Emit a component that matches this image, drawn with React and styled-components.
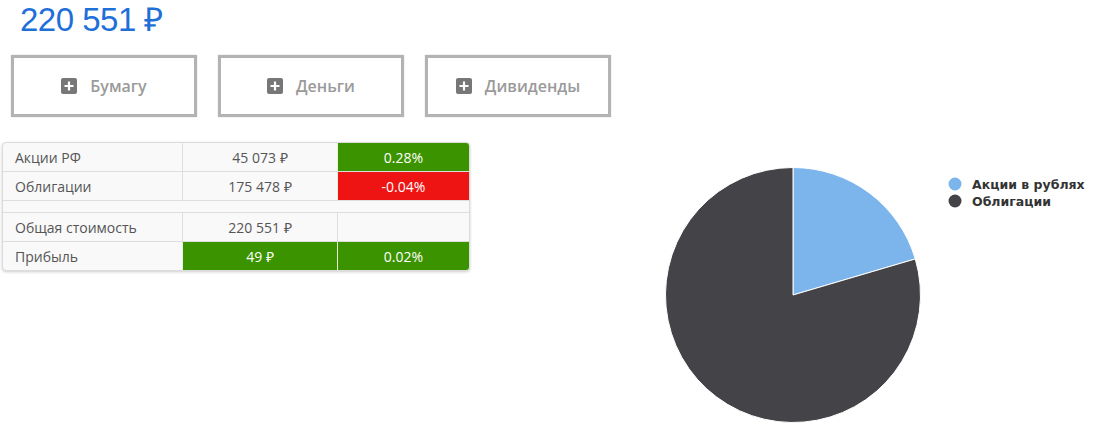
import styled, { createGlobalStyle } from "styled-components";

const GlobalStyle = createGlobalStyle`
    body {
        margin: 0;
        background: #fff;
        font-family: "Open Sans", "Liberation Sans", sans-serif;
    }
`

const rows = [
    { name: "Акции РФ", value: "45 073 ₽", change: "0.28%", tone: "up" },
    { name: "Облигации", value: "175 478 ₽", change: "-0.04%", tone: "down" },
]

const slices = [
    { label: "Акции в рублях", amount: 45073, color: "#7cb5ec" },
    { label: "Облигации", amount: 175478, color: "#434348" },
]

const PlusIcon = () => (
    <svg width="16" height="16" viewBox="0 0 16 16">
        <rect width="16" height="16" rx="2" fill="#777" />
        <path d="M8 3.5v9M3.5 8h9" stroke="#fff" strokeWidth="2.2" />
    </svg>
)

const Pie = () => {
    const cx = 323, cy = 153, r = 127.5
    const total = slices.reduce((s, x) => s + x.amount, 0)
    let angle = 0
    const point = (a) => [cx + r * Math.sin(a), cy - r * Math.cos(a)]
    return (
        <svg width="645" height="296" viewBox="0 0 645 296">
            {slices.map((slice) => {
                const start = angle
                const end = angle + (slice.amount / total) * Math.PI * 2
                angle = end
                const [x1, y1] = point(start)
                const [x2, y2] = point(end)
                const large = end - start > Math.PI ? 1 : 0
                return (
                    <path
                        key={slice.label}
                        d={`M${cx} ${cy} L${x1} ${y1} A${r} ${r} 0 ${large} 1 ${x2} ${y2} Z`}
                        fill={slice.color}
                        stroke="#fff"
                        strokeWidth="1"
                        strokeLinejoin="round"
                    />
                )
            })}
            {slices.map((slice, i) => (
                <g key={slice.label} transform={`translate(485 ${42 + i * 17})`}>
                    <circle cx="0" cy="0" r="6.5" fill={slice.color} />
                    <LegendText x="17" y="4.5">{slice.label}</LegendText>
                </g>
            ))}
        </svg>
    )
}

const App = () => {
    return (
        <Page>
            <GlobalStyle />
            <Total>220 551 ₽</Total>
            <Toolbar>
                <AddButton><PlusIcon />Бумагу</AddButton>
                <AddButton><PlusIcon />Деньги</AddButton>
                <AddButton><PlusIcon />Дивиденды</AddButton>
            </Toolbar>
            <Content>
                <Summary>
                    {rows.map((row) => (
                        <Row key={row.name}>
                            <NameCell>{row.name}</NameCell>
                            <Cell>{row.value}</Cell>
                            <Cell $tone={row.tone}>{row.change}</Cell>
                        </Row>
                    ))}
                    <Spacer />
                    <Row>
                        <NameCell>Общая стоимость</NameCell>
                        <Cell>220 551 ₽</Cell>
                        <Cell />
                    </Row>
                    <Row $last>
                        <NameCell>Прибыль</NameCell>
                        <Cell $tone="up">49 ₽</Cell>
                        <Cell $tone="up">0.02%</Cell>
                    </Row>
                </Summary>
                <ChartArea>
                    <Pie />
                </ChartArea>
            </Content>
        </Page>
    )
}

const Page = styled.div`
    padding: 0 2px;
    width: 1113px;
`
const Total = styled.h1`
    margin: 0 0 0 18px;
    font-family: "Liberation Sans", sans-serif;
    font-weight: normal;
    font-size: 33px;
    line-height: 40px;
    letter-spacing: -0.5px;
    color: #1f6fd8;
`
const Toolbar = styled.div`
    display: flex;
    gap: 21px;
    margin: 15px 0 0 9px;
`
const AddButton = styled.button`
    display: flex;
    align-items: center;
    justify-content: center;
    gap: 13px;
    width: 186px;
    height: 62px;
    padding: 0;
    background: #fff;
    border: 3px solid #b3b3b3;
    box-shadow: 0 0 1px rgba(0,0,0,0.25);
    font-family: "Open Sans", sans-serif;
    font-weight: 600;
    font-size: 16px;
    color: #9a9a9a;
    cursor: pointer;
`
const Content = styled.div`
    display: flex;
    align-items: flex-start;
    margin-top: 25px;
`
const Summary = styled.div`
    width: 468px;
    border: 1px solid #dcdcdc;
    border-radius: 4px;
    overflow: hidden;
    background: #f9f9f9;
    box-shadow: 0 1px 3px rgba(0,0,0,0.2);
`
const Row = styled.div`
    display: grid;
    grid-template-columns: 179px 155px 1fr;
    height: 28px;
    border-bottom: ${(p) => (p.$last ? "none" : "1px solid #dddddd")};
`
const Cell = styled.div`
    display: flex;
    align-items: center;
    justify-content: center;
    font-size: 14px;
    color: ${(p) => (p.$tone ? "#fff" : "#555")};
    background: ${(p) => (p.$tone === "up" ? "#3b9300" : p.$tone === "down" ? "#ef1414" : "transparent")};
    border-left: 1px solid ${(p) => (p.$tone ? "#e6f0dd" : "#dddddd")};
`
const NameCell = styled.div`
    display: flex;
    align-items: center;
    padding-left: 12px;
    font-size: 14px;
    color: #555;
`
const Spacer = styled.div`
    height: 11px;
    border-bottom: 1px solid #dddddd;
`
const ChartArea = styled.div`
    flex: 1;
`
const LegendText = styled.text`
    font-family: "DejaVu Sans", Verdana, sans-serif;
    font-weight: bold;
    font-size: 12.5px;
    fill: #333;
`

export default App
